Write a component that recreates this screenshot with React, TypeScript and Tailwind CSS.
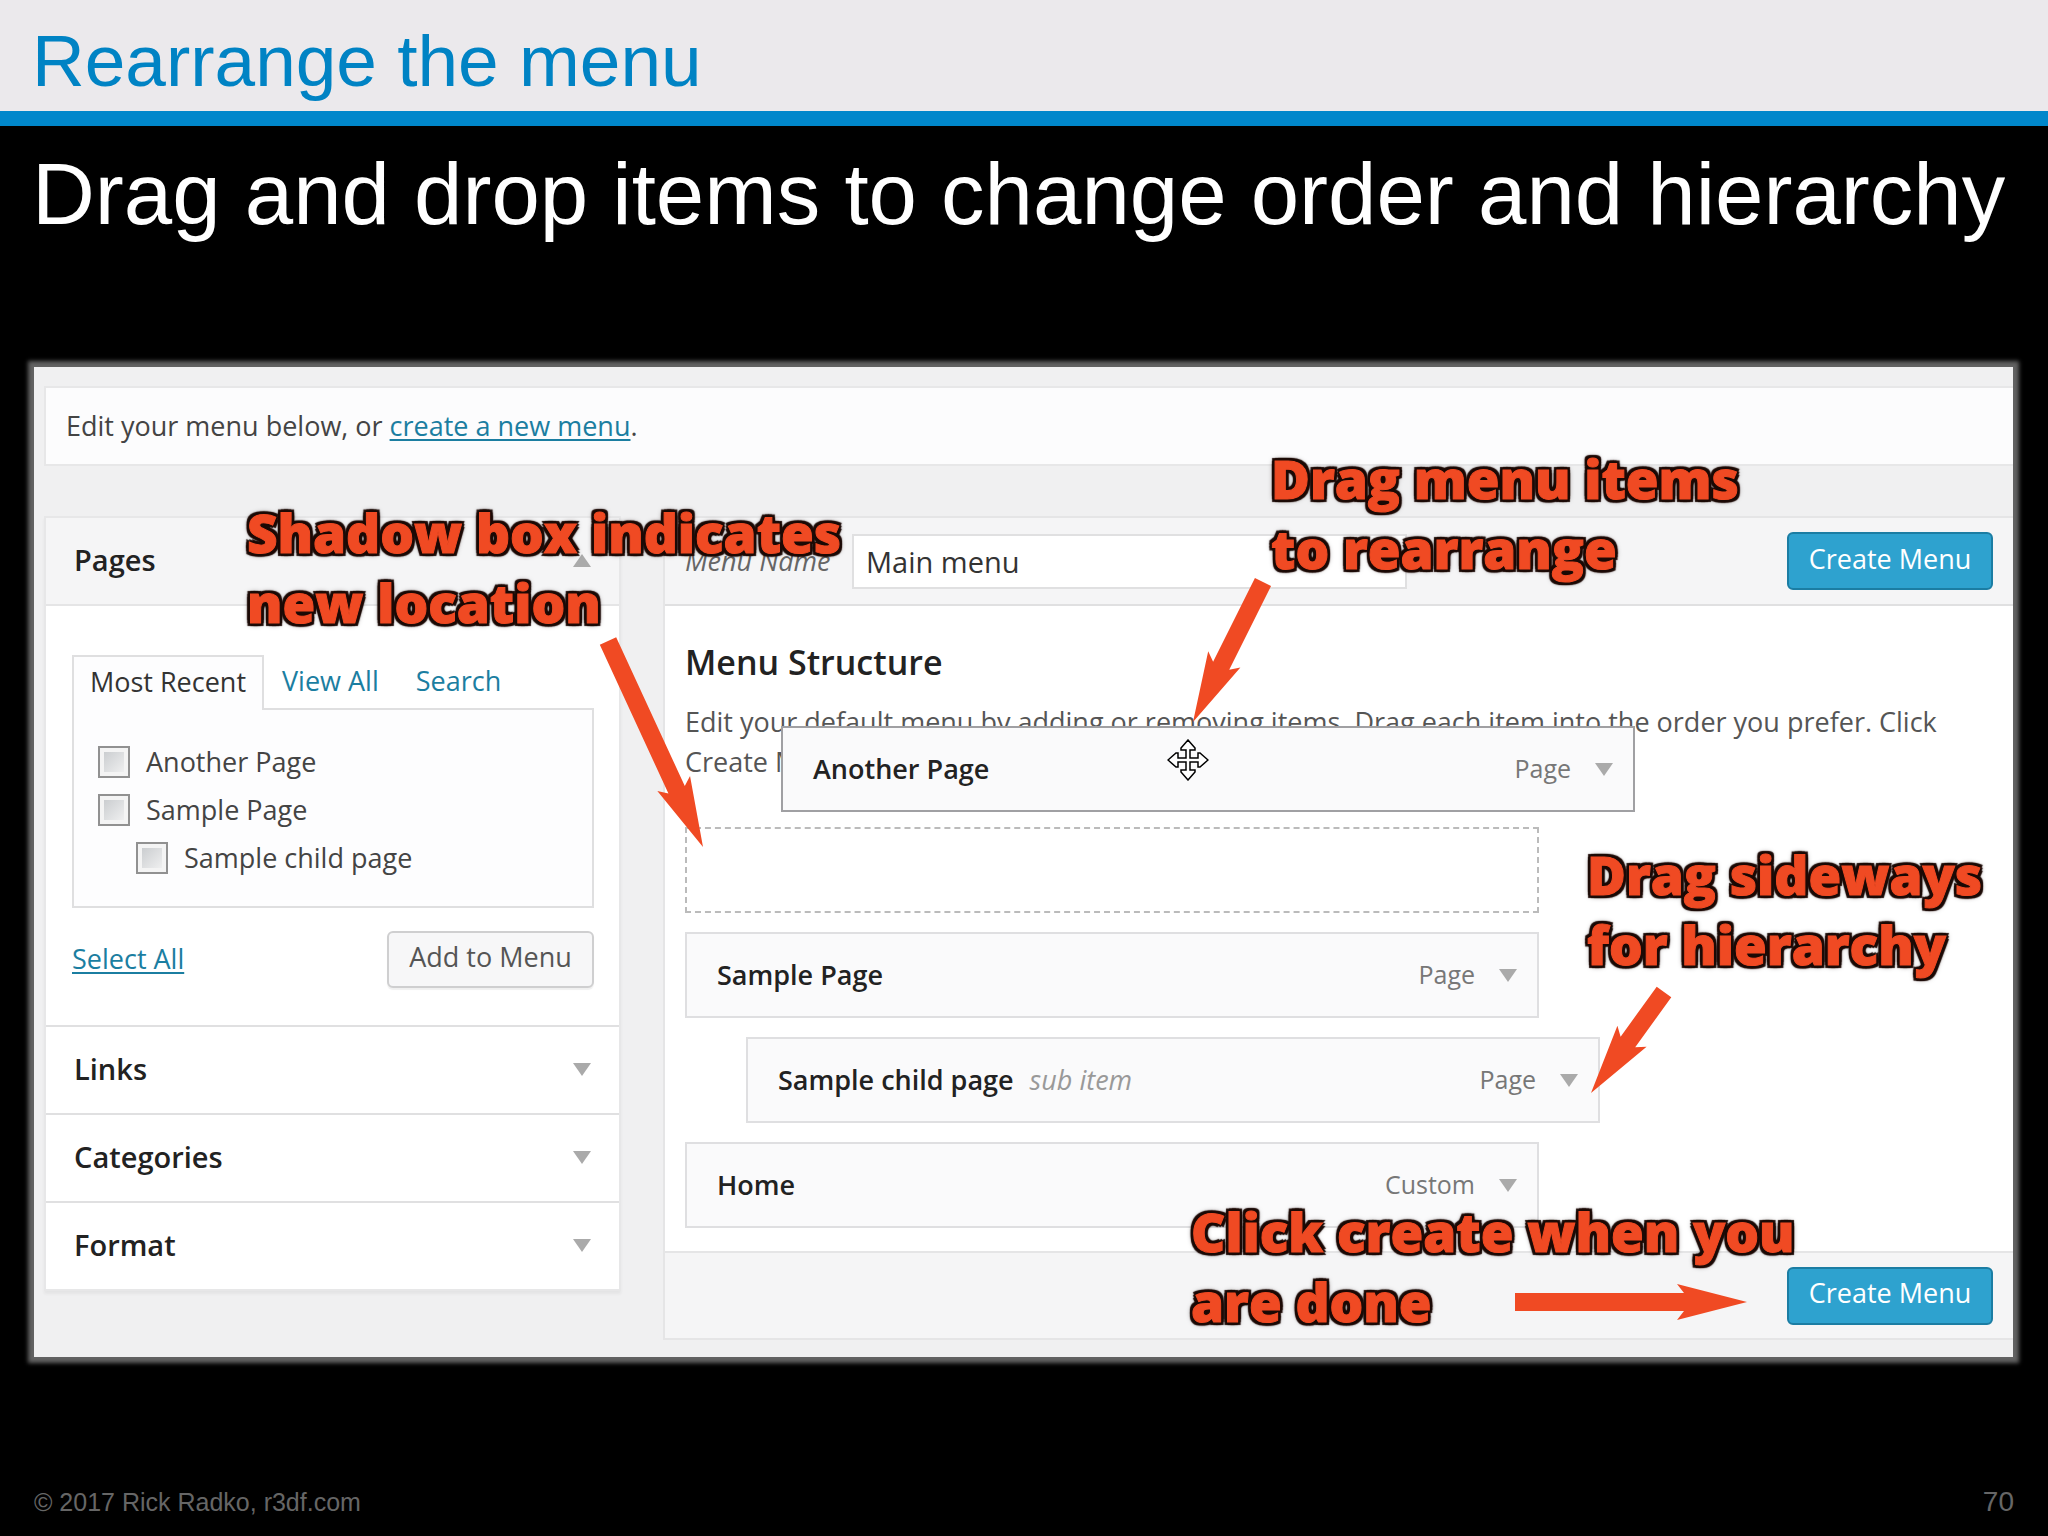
import { useState } from "react";
import type { ReactNode } from "react";
import clsx from "clsx";

type MenuItem = { title: string; type: string; sub?: boolean };
type Point = [number, number];

const PAGES = [
  { id: "another-page", label: "Another Page" },
  { id: "sample-page", label: "Sample Page" },
  { id: "sample-child-page", label: "Sample child page", child: true },
];

const SECTIONS = ["Links", "Categories", "Format"];

const ITEMS: MenuItem[] = [
  { title: "Sample Page", type: "Page" },
  { title: "Sample child page", type: "Page", sub: true },
  { title: "Home", type: "Custom" },
];

// Start and tip of each arrow, measured from the corner of the screen
const ARROWS: { from: Point; to: Point }[] = [
  { from: [574, 274], to: [669, 480] },
  { from: [1229, 215], to: [1159, 355] },
  { from: [1630, 625], to: [1557, 726] },
  { from: [1481, 935], to: [1713, 935] },
];

function Triangle({ up }: { up?: boolean }) {
  return (
    <svg width="18" height="13" viewBox="0 0 18 13" className="shrink-0 fill-[#aaaaaa]" aria-hidden="true">
      <path d={up ? "M0 13 9 0l9 13Z" : "M0 0h18L9 13Z"} />
    </svg>
  );
}

function Arrow({ from, to }: { from: Point; to: Point }) {
  const dx = to[0] - from[0];
  const dy = to[1] - from[1];
  const len = Math.hypot(dx, dy);
  const angle = (Math.atan2(dy, dx) * 180) / Math.PI;
  return (
    <path
      transform={`translate(${to[0]} ${to[1]}) rotate(${angle})`}
      d={`M${-len} -9H-63L-70 -18L0 0L-70 18L-63 9H${-len}Z`}
    />
  );
}

function MoveCursor() {
  return (
    <svg
      width="42"
      height="42"
      viewBox="0 0 42 42"
      className="absolute top-[11px] left-[384px] fill-white stroke-black stroke-[1.5]"
      aria-hidden="true"
    >
      <path d="M21 1 28 9v2h-5v8h8v-5h2l8 7-8 7h-2v-5h-8v8h5v2l-7 8-7-8v-2h5v-8h-8v5H9l-8-7 8-7h2v5h8v-8h-5V9Z" />
    </svg>
  );
}

function Callout({ className, children }: { className: string; children: ReactNode }) {
  return (
    <p
      className={clsx(
        "pointer-events-none absolute text-[53px] leading-[70px] font-extrabold whitespace-nowrap text-[#f04a23]",
        "[-webkit-text-stroke:1px_#f04a23]",
        "[text-shadow:3px_0_1px_#1c0a06,-3px_0_1px_#1c0a06,0_3px_1px_#1c0a06,0_-3px_1px_#1c0a06,3px_3px_1px_#1c0a06,-3px_3px_1px_#1c0a06,3px_-3px_1px_#1c0a06,-3px_-3px_1px_#1c0a06,0_0_6px_#1c0a06]",
        className
      )}
    >
      {children}
    </p>
  );
}

function CreateButton() {
  return (
    <button
      type="button"
      className="h-[58px] w-[206px] rounded-md border-2 border-[#1b7da3] bg-[#2ea2cf] pb-1 text-[27px] text-white"
    >
      Create Menu
    </button>
  );
}

function ItemBar({ item, className, children }: { item: MenuItem; className?: string; children?: ReactNode }) {
  return (
    <div
      className={clsx(
        "relative flex h-[86px] w-[854px] items-center border-2 bg-[#fafafb] pr-[20px] pl-[30px]",
        className
      )}
    >
      <span className="font-semibold text-[#222222]">{item.title}</span>
      {item.sub && <span className="ml-4 text-[#999999] italic">sub item</span>}
      <span className="mr-6 ml-auto text-[25px] text-[#777777]">{item.type}</span>
      <button type="button" aria-label={`Edit ${item.title}`}>
        <Triangle />
      </button>
      {children}
    </div>
  );
}

function PagesPanel() {
  const [checked, setChecked] = useState<string[]>([]);

  const toggle = (id: string) =>
    setChecked((c) => (c.includes(id) ? c.filter((x) => x !== id) : [...c, id]));

  return (
    <section className="w-[577px] shrink-0 border-2 border-[#e7e7e8] bg-white shadow-[0_3px_3px_rgba(0,0,0,0.05)]">
      <h2>
        <button
          type="button"
          className="flex h-[88px] w-full items-center justify-between border-b-2 border-[#e5e5e6] bg-[#f5f5f6] pr-[28px] pb-[2px] pl-[28px] text-[29px] font-semibold text-[#222222]"
        >
          Pages
          <Triangle up />
        </button>
      </h2>

      <div className="pt-[49px] pr-[25px] pb-[37px] pl-[26px]">
        <div className="flex" role="tablist">
          <button
            type="button"
            role="tab"
            aria-selected="true"
            className="relative z-10 -mb-[2px] h-[55px] w-[192px] border-2 border-b-0 border-[#dfdfe0] bg-[#fdfdfe] pb-[3px] text-[#333333]"
          >
            Most Recent
          </button>
          <button type="button" role="tab" aria-selected="false" className="ml-[18px] text-[#1b7ea1]">
            View All
          </button>
          <button type="button" role="tab" aria-selected="false" className="ml-[37px] text-[#1b7ea1]">
            Search
          </button>
        </div>
        <ul className="flex h-[200px] flex-col gap-4 border-2 border-[#dfdfe0] bg-[#fdfdfe] px-6 pt-9">
          {PAGES.map((p) => (
            <li key={p.id} className={clsx("flex h-8 items-center gap-4", p.child && "ml-[38px]")}>
              <input
                id={p.id}
                type="checkbox"
                checked={checked.includes(p.id)}
                onChange={() => toggle(p.id)}
                className="size-8 appearance-none border-2 border-[#919191] bg-linear-to-br from-[#c4c7ca] to-[#f6f6f6] shadow-[inset_0_0_0_4px_#f4f4f4] checked:from-[#1b7ea1]"
              />
              <label htmlFor={p.id}>{p.label}</label>
            </li>
          ))}
        </ul>
        <div className="mt-[23px] flex items-center justify-between">
          <a href="#select-all" className="text-[#1b7ea1] underline decoration-2 underline-offset-3">
            Select All
          </a>
          <button
            type="button"
            className="h-[57px] w-[207px] rounded-md border-2 border-[#cfcfd0] bg-[#f7f7f8] pb-1 text-[#555555] shadow-[0_2px_1px_rgba(0,0,0,0.06)]"
          >
            Add to Menu
          </button>
        </div>
      </div>

      {SECTIONS.map((name) => (
        <h2 key={name}>
          <button
            type="button"
            className="flex h-[88px] w-full items-center justify-between border-t-2 border-[#e0e0e1] pr-[28px] pb-[2px] pl-[28px] text-[29px] font-semibold text-[#222222]"
          >
            {name}
            <Triangle />
          </button>
        </h2>
      ))}
    </section>
  );
}

function MenuEditor() {
  const [name, setName] = useState("Main menu");

  return (
    <section className="min-w-0 flex-1 border-2 border-r-0 border-[#e5e5e6] bg-white">
      <header className="flex h-[88px] items-center border-b-2 border-[#e0e0e1] bg-[#f5f5f6] pr-[20px] pl-[20px]">
        <label htmlFor="menu-name" className="w-[167px] text-[#666666] italic">
          Menu Name
        </label>
        <input
          id="menu-name"
          value={name}
          onChange={(e) => setName(e.target.value)}
          className="h-[55px] w-[555px] border-2 border-[#e0e0e1] bg-white px-3 text-[29px] text-[#333333]"
        />
        <div className="ml-auto">
          <CreateButton />
        </div>
      </header>

      <div className="px-[20px] pt-[32px] pb-[23px]">
        <h3 className="text-[34px] leading-[48px] font-semibold text-[#222222]">Menu Structure</h3>
        <div className="relative mt-[16px]">
          <p className="leading-[40px] text-[#555555]">
            Edit your default menu by adding or removing items. Drag each item into the order you prefer. Click Create
            Menu to save it.
          </p>
          {/* item being dragged, floats above the list */}
          <ItemBar
            item={{ title: "Another Page", type: "Page" }}
            className="!absolute top-[24px] left-[96px] border-[#a0a0a3]"
          >
            <MoveCursor />
          </ItemBar>
        </div>
        <div className="mt-[45px] flex flex-col gap-[19px]">
          <div className="h-[86px] w-[854px] border-2 border-dashed border-[#bbbbbb]" />
          {ITEMS.map((item) => (
            <ItemBar key={item.title} item={item} className={clsx("border-[#dfdfe1]", item.sub && "ml-[61px]")} />
          ))}
        </div>
      </div>

      <footer className="flex h-[87px] items-center justify-end border-t-2 border-[#e5e5e6] bg-[#f5f5f6] pr-[20px]">
        <CreateButton />
      </footer>
    </section>
  );
}

export default function App() {
  return (
    <div className="flex min-h-screen flex-col bg-black font-['Liberation_Sans',Arial,sans-serif]">
      <header className="border-b-[15px] border-[#0087cb] bg-[#ebe9ec] px-[32px] pt-[18px] pb-[8px]">
        <h1 className="text-[73px] leading-[85px] text-[#0083c4]">Rearrange the menu</h1>
      </header>

      <p className="px-[32px] pt-[18px] text-[87px] leading-[100px] whitespace-nowrap text-white">
        Drag and drop items to change order and hierarchy
      </p>

      <main className="relative mt-[123px] mr-[35px] ml-[34px] bg-[#f0f0f1] pt-[19px] pb-[17px] pl-[10px] font-['Open_Sans',sans-serif] text-[27px] text-[#444444] shadow-[0_0_4px_6px_#626262]">
        <p className="border-2 border-r-0 border-[#e7e7e8] bg-[#fcfcfd] px-[20px] py-[18px] leading-[40px]">
          Edit your menu below, or{" "}
          <a href="#new-menu" className="text-[#1b7ea1] underline decoration-2 underline-offset-3">
            create a new menu
          </a>
          .
        </p>

        <div className="mt-[50px] flex items-start gap-[42px]">
          <PagesPanel />
          <MenuEditor />
        </div>

        <svg className="pointer-events-none absolute inset-0 size-full fill-[#f04a23]" aria-hidden="true">
          {ARROWS.map((a, i) => (
            <Arrow key={i} from={a.from} to={a.to} />
          ))}
        </svg>
        <Callout className="top-[131px] left-[213px]">
          Shadow box indicates
          <br />
          new location
        </Callout>
        <Callout className="top-[77px] left-[1237px]">
          Drag menu items
          <br />
          to rearrange
        </Callout>
        <Callout className="top-[473px] left-[1553px]">
          Drag sideways
          <br />
          for hierarchy
        </Callout>
        <Callout className="top-[830px] left-[1157px]">
          Click create when you
          <br />
          are done
        </Callout>
      </main>

      <footer className="mt-auto flex items-center justify-between px-[34px] pb-[16px] leading-[36px] text-[#666666]">
        <span className="text-[25px]">© 2017 Rick Radko, r3df.com</span>
        <span className="text-[28px]">70</span>
      </footer>
    </div>
  );
}
